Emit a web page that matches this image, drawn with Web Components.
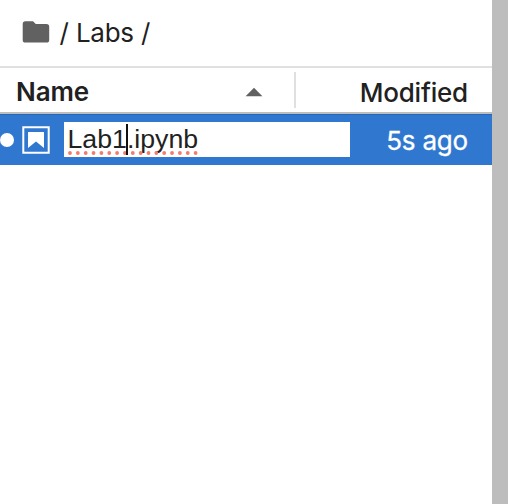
<!DOCTYPE html>
<html lang="en">
<head>
<meta charset="utf-8">
<title>File browser</title>
<style>
html, body { margin: 0; height: 100%; background: #fff; overflow: hidden; }
body { font-family: Inter, "Liberation Sans", sans-serif; font-size: 26px; line-height: 32px; color: #212121; }
</style>
</head>
<body>
<file-browser>
  <path-crumbs><span>/</span><span>Labs</span><span>/</span></path-crumbs>
  <list-header><span slot="name">Name</span><span slot="modified">Modified</span></list-header>
  <file-row><name-editor slot="name" before="Lab1" after=".ipynb"></name-editor><span slot="modified">5s ago</span></file-row>
</file-browser>
<script>
const define = (name, html) => customElements.define(name, class extends HTMLElement {
  constructor() {
    super();
    this.attachShadow({ mode: 'open' }).innerHTML = html;
    this.shadowRoot.querySelectorAll('[data-attr]').forEach(el => {
      el.textContent = this.getAttribute(el.dataset.attr);
    });
  }
});

define('file-browser', `
<style>
:host { display: flex; width: 508px; height: 504px; }
main { flex: 1; display: flex; flex-direction: column; min-width: 0; }
aside { width: 16px; background: #bdbdbd; }
</style>
<main><slot></slot></main><aside></aside>`);

define('path-crumbs', `
<style>
:host { display: flex; align-items: center; height: 66px; box-sizing: border-box; padding: 0 0 2px 22px; }
svg { width: 28px; height: 24px; margin-right: 9.5px; flex: none; }
div { display: flex; gap: 7.4px; padding-top: 1px; letter-spacing: -.3px; }
</style>
<svg viewBox="0 0 28 24"><path fill="#616161" d="M3.4 1.2H11l2.8 2.7h10.7a2.7 2.7 0 0 1 2.7 2.7v13.3a2.7 2.7 0 0 1-2.7 2.7H3.4a2.7 2.7 0 0 1-2.7-2.7v-16a2.7 2.7 0 0 1 2.7-2.7z"/></svg>
<div><slot></slot></div>`);

define('list-header', `
<style>
:host { display: flex; height: 48px; box-sizing: border-box; border-top: 2px solid #e0e0e0; border-bottom: 2px solid #bdbdbd; align-items: center; }
.name { box-sizing: border-box; width: 294px; padding: 4px 31px 0 16px; display: flex; justify-content: space-between; align-items: center; font-weight: 600; letter-spacing: -.1px; }
svg { width: 18px; height: 10px; }
i { width: 2px; height: 36px; background: #e0e0e0; }
.mod { flex: 1; text-align: right; padding: 6px 24px 0 0; font-weight: 500; letter-spacing: -.2px; }
</style>
<div class="name"><slot name="name"></slot><svg viewBox="0 0 18 10"><path fill="#616161" d="M.6 9.2L9 .8l8.4 8.4z"/></svg></div>
<i></i><div class="mod"><slot name="modified"></slot></div>`);

define('file-row', `
<style>
:host { display: flex; align-items: center; height: 51px; background: #3077cf; color: #fff; box-shadow: inset 0 2px 1px -1px #2867b7; }
.dot { width: 14px; height: 14px; border-radius: 50%; background: #fff; margin: 1px 8px 0 0; flex: none; }
svg { width: 28px; height: 28px; margin: 1px 14px 0 0; flex: none; }
.mod { flex: 1; text-align: right; padding: 2px 24px 0 0; letter-spacing: -.2px; -webkit-text-stroke: .3px #fff; }
</style>
<span class="dot"></span>
<svg viewBox="0 0 28 28"><path fill="none" stroke="#fff" stroke-width="2" d="M1.3 1.3h25.4v25.4H1.3z"/><path fill="#fff" d="M6 6h16v16l-8-6.5L6 22z"/></svg>
<slot name="name"></slot>
<div class="mod"><slot name="modified"></slot></div>`);

define('name-editor', `
<style>
:host { display: block; box-sizing: border-box; width: 286px; height: 35px; background: #fff; color: #212121; padding: 1px 4px 0 3.5px; font: 26.7px/32px "Liberation Sans", sans-serif; }
.text { display: flex; width: max-content; position: relative; }
i { width: 2px; margin: 1px -1px 0; height: 31px; background: #111; z-index: 1; }
svg { position: absolute; left: -.5px; top: 26.5px; width: 134px; height: 6px; }
</style>
<div class="text"><svg viewBox="0 0 134 6"><path fill="none" stroke="#f47b70" stroke-width="3.8" stroke-linecap="round" stroke-dasharray="0 7.85" d="M3 3h127"/></svg><span data-attr="before"></span><i></i><span data-attr="after"></span></div>`);
</script>
</body>
</html>
